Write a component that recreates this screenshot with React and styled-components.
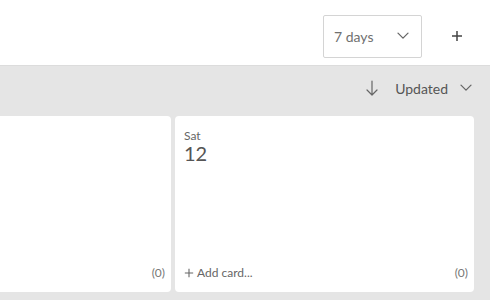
import styled, { createGlobalStyle } from 'styled-components';

const Global = createGlobalStyle`
  html, body {
    margin: 0;
    padding: 0;
    background: #fff;
    font-family: Lato, "Open Sans", sans-serif;
  }
`;

const Page = styled.div`
  width: 500px;
  height: 300px;
  display: flex;
  flex-direction: column;
  overflow: hidden;
`;

const TopBar = styled.div`
  height: 66px;
  display: flex;
  align-items: center;
  justify-content: flex-end;
  padding-right: 26px;
  gap: 28px;
  border-bottom: 1px solid #dcdcdc;
  width: 490px;
  box-sizing: border-box;
`;

const Select = styled.div`
  width: 99px;
  height: 43px;
  box-sizing: border-box;
  border: 1px solid #d4d4d4;
  border-radius: 2px;
  display: flex;
  align-items: center;
  justify-content: space-between;
  padding: 0 12px 0 10px;
  font-size: 14px;
  color: #707070;
  margin-top: 7px;
`;

const PlusButton = styled.div`
  width: 14px;
  display: flex;
  align-items: center;
  justify-content: center;
  margin-top: 7px;
`;

const Board = styled.div`
  width: 490px;
  flex: 1;
  background: #e5e5e5;
  display: flex;
  flex-direction: column;
  overflow: hidden;
`;

const SortRow = styled.div`
  height: 50px;
  box-sizing: border-box;
  padding: 0 18px 6px 0;
  display: flex;
  align-items: center;
  justify-content: flex-end;
  font-size: 14px;
  color: #555;
`;

const SortLabel = styled.span`
  margin: 0 12px 0 17px;
`;

const Columns = styled.div`
  display: flex;
  justify-content: flex-end;
  gap: 4px;
  padding-right: 16px;
  height: 176px;
`;

const Card = styled.div`
  flex: 0 0 299px;
  background: #fff;
  border-radius: 4px;
  display: flex;
  flex-direction: column;
  padding: 13px 6px 12px 9px;
  box-sizing: border-box;
`;

const DayName = styled.div`
  font-size: 12px;
  color: #666;
  line-height: 13px;
`;

const DayNumber = styled.div`
  font-size: 20px;
  color: #555;
  line-height: 22px;
`;

const CardFooter = styled.div`
  margin-top: auto;
  display: flex;
  align-items: center;
  justify-content: space-between;
  font-size: 12px;
  color: #777;
`;

const AddCard = styled.span`
  display: flex;
  align-items: center;
  gap: 3px;
  color: #666;
  visibility: ${(p) => (p.$show ? 'visible' : 'hidden')};
`;

const Chevron = ({ color = '#666', size = 12 }) => (
  <svg width={size} height={size * 0.6} viewBox="0 0 12 7" fill="none">
    <path d="M1 1l5 5 5-5" stroke={color} strokeWidth="1.3" strokeLinecap="round" strokeLinejoin="round" />
  </svg>
);

const Plus = ({ size = 12, color = '#444', w = 1.5 }) => (
  <svg width={size} height={size} viewBox="0 0 12 12">
    <path d="M6 1v10M1 6h10" stroke={color} strokeWidth={w} />
  </svg>
);

const ArrowDown = () => (
  <svg width="12" height="16" viewBox="0 0 12 16" fill="none">
    <path d="M6 1v14M1 10l5 5 5-5" stroke="#666" strokeWidth="1.2" strokeLinecap="round" strokeLinejoin="round" />
  </svg>
);

function Column({ day, date, add }) {
  return (
    <Card>
      {day && <DayName>{day}</DayName>}
      {date && <DayNumber>{date}</DayNumber>}
      <CardFooter>
        <AddCard $show={add}>
          <Plus size={10} color="#666" w={1.3} />
          Add card...
        </AddCard>
        <span>(0)</span>
      </CardFooter>
    </Card>
  );
}

export default function App() {
  return (
    <Page>
      <Global />
      <TopBar>
        <Select>
          <span>7 days</span>
          <Chevron />
        </Select>
        <PlusButton>
          <Plus />
        </PlusButton>
      </TopBar>
      <Board>
        <SortRow>
          <ArrowDown />
          <SortLabel>Updated</SortLabel>
          <Chevron />
        </SortRow>
        <Columns>
          <Column />
          <Column day="Sat" date="12" add />
        </Columns>
      </Board>
    </Page>
  );
}
